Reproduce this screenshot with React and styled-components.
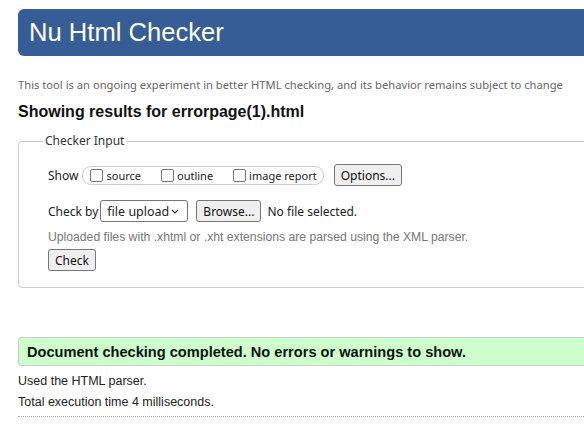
import React from 'react';
import styled, { createGlobalStyle } from 'styled-components';

const GlobalStyle = createGlobalStyle`
    html, body {
        margin: 0;
        padding: 0;
        overflow: hidden;
        background: #fff;
    }
    body {
        font-family: "Liberation Sans", Arial, sans-serif;
        color: #222;
    }
`

const Page = styled.div`
    width: 1100px;
    padding: 9px 0 0 18px;
`

const Header = styled.header`
    height: 47px;
    background-color: #365d95;
    border-radius: 6px;
    display: flex;
    align-items: center;
    padding-left: 11px;
`

const Title = styled.h1`
    margin: 0;
    color: #fff;
    font-weight: normal;
    font-size: 25.6px;
    line-height: 47px;
`

const Intro = styled.p`
    margin: 21px 0 0 0;
    font-family: "Noto Sans", sans-serif;
    font-size: 11.2px;
    line-height: 16px;
    color: #666;
`

const Heading = styled.h2`
    margin: 9px 0 0 0;
    font-size: 16px;
    line-height: 20px;
    font-weight: bold;
    color: #111;
`

const Fieldset = styled.fieldset`
    margin: 11px 0 0 0;
    padding: 0;
    border: 1px solid #ccc;
    border-radius: 4px;
`

const Legend = styled.legend`
    margin-left: 24px;
    padding: 0 2px;
    font-family: "Noto Sans", sans-serif;
    font-size: 12px;
    line-height: 16px;
    color: #333;
`

const FieldBody = styled.div`
    padding: 15px 0 16px 29px;
    display: flex;
    flex-direction: column;
`

const Row = styled.div`
    display: flex;
    align-items: center;
    height: 22px;
    margin-top: ${p => p.$gap || 0}px;
    font-family: "Noto Sans", sans-serif;
    font-size: 12px;
    color: #222;
`

const Label = styled.span`
    margin-right: ${p => p.$mr || 4}px;
`

const OptionGroup = styled.div`
    display: flex;
    align-items: center;
    height: 17px;
    border: 1px solid #ccc;
    border-radius: 9px;
    padding: 0 6px 0 7px;
    margin-right: 10px;
    font-size: 11px;
`

const Option = styled.label`
    display: flex;
    align-items: center;
    margin-right: ${p => p.$last ? 0 : 20}px;
`

const Box = styled.span`
    width: 11px;
    height: 11px;
    border: 1.5px solid #767676;
    border-radius: 2px;
    background: #fff;
    margin-right: 3px;
`

const Button = styled.button`
    height: 22px;
    padding: 0 6px;
    border: 1px solid #767676;
    border-radius: 3px;
    background: #efefef;
    font-family: "Noto Sans", sans-serif;
    font-size: 12px;
    color: #111;
    margin-right: ${p => p.$mr || 0}px;
`

const Select = styled.div`
    height: 20px;
    width: 86px;
    box-sizing: content-box;
    border: 1px solid #767676;
    border-radius: 3px;
    background: #fff;
    display: flex;
    align-items: center;
    justify-content: space-between;
    margin-right: 8px;
    font-size: 12.5px;
`

const SelectText = styled.span`
    padding-left: 6px;
`

const Chevron = styled.svg`
    margin-right: 8px;
`

const Help = styled.p`
    margin: 7px 0 0 0;
    font-size: 12.2px;
    line-height: 16px;
    color: #777;
`

const CheckRow = styled.div`
    margin-top: 4px;
`

const Success = styled.div`
    margin-top: 49px;
    height: 27px;
    display: flex;
    align-items: center;
    padding-left: 8px;
    background: #ccffcc;
    border: 1px solid #ccc;
    border-radius: 3px;
    font-size: 14.6px;
    font-weight: bold;
    color: #111;
`

const Note = styled.p`
    margin: ${p => p.$mt}px 0 0 0;
    font-size: 12.5px;
    line-height: 16px;
    color: #222;
`

const Rule = styled.hr`
    margin: 6px 0 0 0;
    border: none;
    border-top: 1px dotted #aaa;
    height: 0;
`

const App = () => {
    return (
        <Page>
            <GlobalStyle />
            <Header>
                <Title>Nu Html Checker</Title>
            </Header>
            <Intro>This tool is an ongoing experiment in better HTML checking, and its behavior remains subject to change</Intro>
            <Heading>Showing results for errorpage(1).html</Heading>
            <Fieldset>
                <Legend>Checker Input</Legend>
                <FieldBody>
                    <Row>
                        <Label>Show</Label>
                        <OptionGroup>
                            <Option><Box />source</Option>
                            <Option><Box />outline</Option>
                            <Option $last><Box />image report</Option>
                        </OptionGroup>
                        <Button>Options...</Button>
                    </Row>
                    <Row $gap={14}>
                        <Label $mr={2}>Check by</Label>
                        <Select>
                            <SelectText>file upload</SelectText>
                            <Chevron width="8" height="5" viewBox="0 0 8 5">
                                <path d="M1 1 L4 4 L7 1" fill="none" stroke="#333" strokeWidth="1.2" />
                            </Chevron>
                        </Select>
                        <Button $mr={6}>Browse...</Button>
                        <span>No file selected.</span>
                    </Row>
                    <Help>Uploaded files with .xhtml or .xht extensions are parsed using the XML parser.</Help>
                    <CheckRow>
                        <Button>Check</Button>
                    </CheckRow>
                </FieldBody>
            </Fieldset>
            <Success>Document checking completed. No errors or warnings to show.</Success>
            <Note $mt={7}>Used the HTML parser.</Note>
            <Note $mt={5}>Total execution time 4 milliseconds.</Note>
            <Rule />
        </Page>
    );
};

export default App;
